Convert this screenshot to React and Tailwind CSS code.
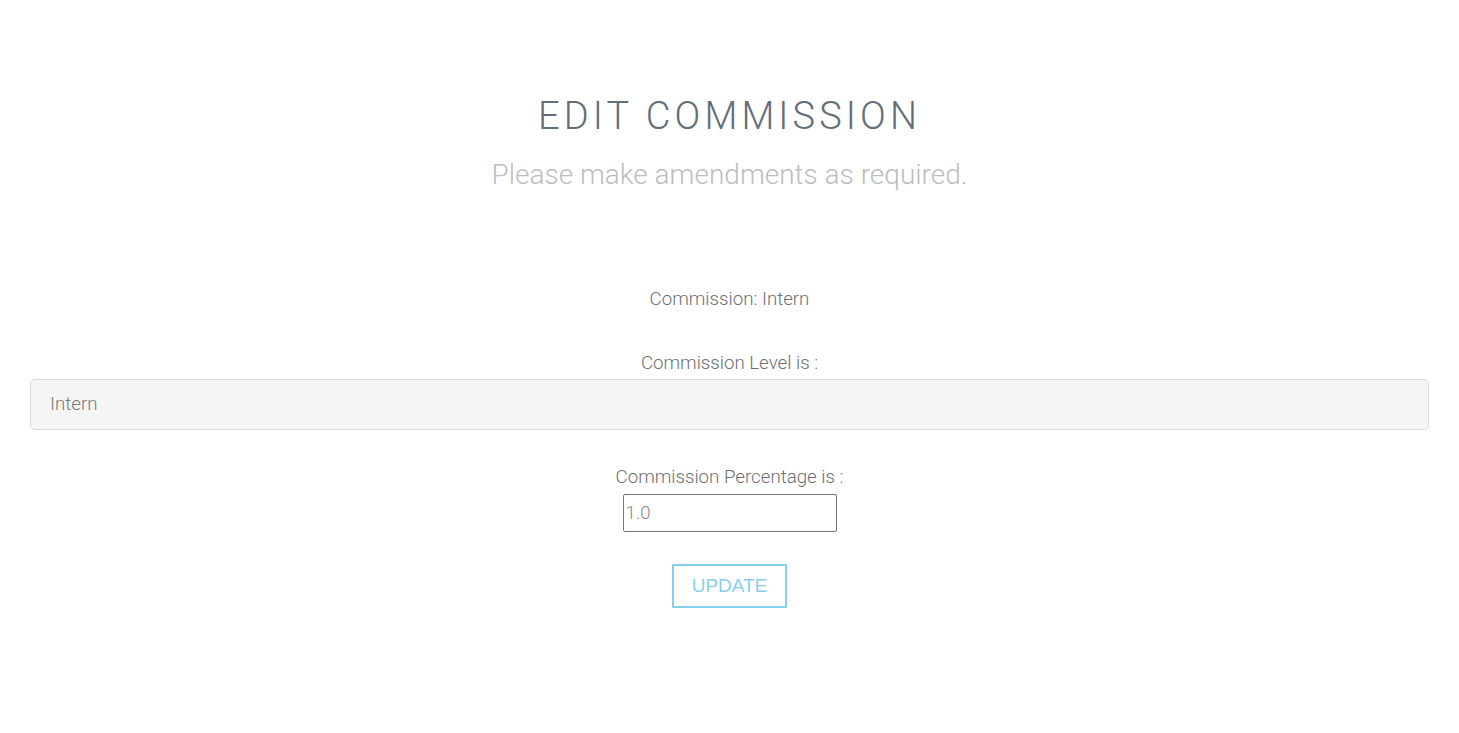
export default function App() {
  return (
    <div className="min-h-[733px] bg-white px-[30px] text-center" style={{ fontFamily: "Roboto, 'Liberation Sans', sans-serif" }}>
      <h1 className="pt-[92px] text-[38px] leading-[48px] font-light tracking-[4.1px] text-[#646e79]">EDIT COMMISSION</h1>
      <p className="mt-[18px] text-[28px] leading-[34px] font-light text-[#bdbdbd]">Please make amendments as required.</p>
      <div className="mt-[95px] text-[18.7px] leading-[24px] font-light text-[#6c6f73]">Commission: Intern</div>
      <div className="mt-[40px] text-[18.7px] leading-[24px] font-light text-[#6c6f73]">Commission Level is :</div>
      <div className="mt-[4px] h-[51px] rounded-[5px] border border-[#dcdcdc] bg-[#f5f5f5] px-[19px] text-left text-[18.7px] leading-[49px] font-light text-[#7a7a7a]">Intern</div>
      <div className="mt-[35px] text-[18.7px] leading-[24px] font-light text-[#6c6f73]">Commission Percentage is :</div>
      <div className="mt-[5px] flex justify-center">
        <div className="h-[38px] w-[214px] rounded-[2px] border border-[#767676] px-[2px] text-left text-[18.7px] leading-[36px] font-light text-[#8a8a8a]">1.0</div>
      </div>
      <div className="mt-[32px] flex justify-center">
        <button className="h-[44px] w-[115px] border-2 border-[#88cfee] bg-white text-[19px] text-[#88cfee]" style={{ fontFamily: "'Liberation Sans', Arial, sans-serif" }}>UPDATE</button>
      </div>
    </div>
  );
}
